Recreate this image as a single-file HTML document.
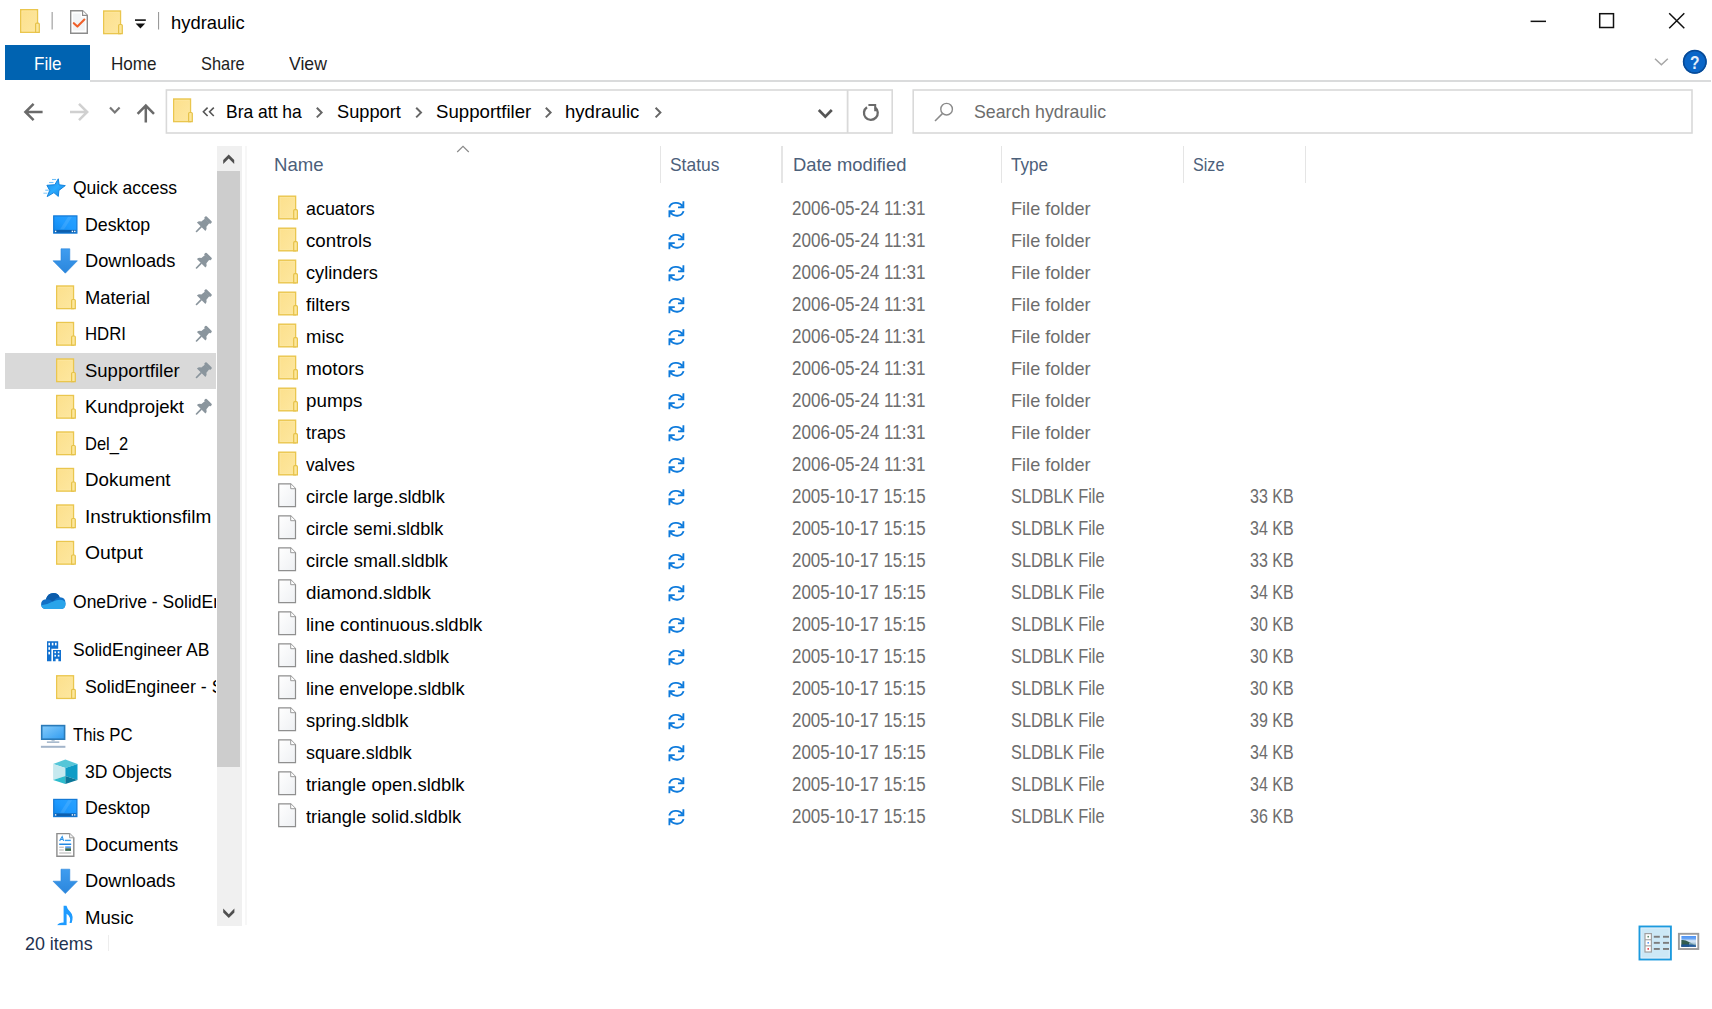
<!DOCTYPE html>
<html><head><meta charset="utf-8"><title>hydraulic</title>
<style>
html,body{margin:0;padding:0;background:#fff;}
body{width:1712px;height:1009px;position:relative;overflow:hidden;font-family:"Liberation Sans",sans-serif;}
.t{position:absolute;white-space:pre;font-family:"Liberation Sans",sans-serif;}
.t span{display:inline-block;transform-origin:0 50%;}
.b{position:absolute;}
#ico{position:absolute;left:0;top:0;}
</style></head><body>
<!-- boxes -->
<div class="b" style="left:5px;top:45px;width:85px;height:35px;background:#0063b1"></div>
<div class="b" style="left:90px;top:80px;width:1621px;height:2px;background:#dadbdc"></div>
<!-- sidebar selection + scrollbar -->
<div class="b" style="left:5px;top:352.5px;width:211px;height:36px;background:#d9d9d9"></div>
<div class="b" style="left:217px;top:145.5px;width:24.6px;height:780px;background:#f0f0f0"></div>
<div class="b" style="left:217px;top:171px;width:23px;height:596px;background:#cdcdcd"></div>
<div class="b" style="left:245px;top:146px;width:2px;height:779px;background:#f7f7f7"></div>
<!-- column separators -->
<div class="b" style="left:660px;top:146px;width:1.3px;height:37px;background:#e5e5e5"></div>
<div class="b" style="left:781.3px;top:146px;width:1.3px;height:37px;background:#e5e5e5"></div>
<div class="b" style="left:1000.5px;top:146px;width:1.3px;height:37px;background:#e5e5e5"></div>
<div class="b" style="left:1183px;top:146px;width:1.3px;height:37px;background:#e5e5e5"></div>
<div class="b" style="left:1304.7px;top:146px;width:1.3px;height:37px;background:#e5e5e5"></div>
<!-- status separators -->
<div class="b" style="left:108px;top:935px;width:1px;height:16px;background:#ededed"></div>
<svg id="ico" width="1712" height="1009" viewBox="0 0 1712 1009">
<defs>
<linearGradient id="fg" x1="0" y1="0" x2="1" y2="1"><stop offset="0" stop-color="#fce08c"/><stop offset="1" stop-color="#fde7a0"/></linearGradient>
<linearGradient id="pg" x1="0" y1="0" x2="1" y2="1"><stop offset="0" stop-color="#ffffff"/><stop offset="1" stop-color="#eef0f3"/></linearGradient>
<linearGradient id="dg" x1="0" y1="1" x2="1" y2="0"><stop offset="0" stop-color="#0f86ea"/><stop offset="0.5" stop-color="#1e9aff"/><stop offset="1" stop-color="#2aa2ff"/></linearGradient>
<linearGradient id="ag" x1="0" y1="0" x2="0" y2="1"><stop offset="0" stop-color="#3f9df0"/><stop offset="1" stop-color="#2b86dc"/></linearGradient>
<linearGradient id="mg" x1="0" y1="0" x2="1" y2="1"><stop offset="0" stop-color="#86ccfb"/><stop offset="1" stop-color="#2f9bf0"/></linearGradient>
<linearGradient id="sg" x1="0" y1="0" x2="1" y2="1"><stop offset="0" stop-color="#1c8de6"/><stop offset="0.5" stop-color="#2babff"/><stop offset="1" stop-color="#1281dc"/></linearGradient>

<g id="fold">
  <rect x="0.7" y="0.7" width="16.8" height="22.6" fill="url(#fg)" stroke="#eac64e" stroke-width="1.4"/>
  <rect x="2" y="2" width="14.2" height="20" fill="none" stroke="#fde9a4" stroke-width="0.8" opacity="0.8"/>
  <path d="M15.6 23.3 V15.2 Q15.6 14.2 16.6 14.2 H18.3 Q19.3 14.2 19.3 15.2 V23.3 Z" fill="#fde79c" stroke="#e6c24a" stroke-width="1.2"/>
</g>
<g id="file">
  <path d="M0.6 0.6 H12.6 L17.4 5.4 V23.4 H0.6 Z" fill="url(#pg)" stroke="#8f8f8f" stroke-width="1.2"/>
  <path d="M12.6 0.6 V5.4 H17.4" fill="#fff" stroke="#9a9a9a" stroke-width="1"/>
</g>
<g id="sync" fill="none" stroke="#0f7bdc" stroke-width="1.9">
  <path d="M0.9 6.2 C2.2 0.6 11 -0.2 14.2 5.2"/>
  <path d="M15.1 9.8 C13.8 15.4 5 16.2 1.8 10.8"/>
  <path d="M15 0 V6.1 H9.6" stroke-width="1.8" />
  <path d="M1 16 V9.9 H6.4" stroke-width="1.8"/>
  <path d="M15 1.5 V6.1 H10.6 Z M1 14.5 V9.9 H5.4 Z" fill="#0f7bdc" stroke="none" opacity="0.55"/>
</g>
<g id="pin" fill="#8a959d">
  <g transform="rotate(45)">
    <rect x="-4.4" y="0" width="8.8" height="3" rx="1"/>
    <path d="M-3.1 2.6 H3.1 L3.6 7.4 Q6 8.6 6 11.2 H-6 Q-6 8.6 -3.6 7.4 Z"/>
    <rect x="-0.85" y="10.6" width="1.7" height="8" rx="0.8"/>
  </g>
</g>
<g id="desk">
  <rect x="0.6" y="0.6" width="23.2" height="17.2" fill="url(#dg)" stroke="#1379d6" stroke-width="1.2"/>
  <rect x="1.2" y="14.6" width="22" height="2.8" fill="#0d5fae"/>
  <rect x="1.8" y="15.4" width="1.4" height="1.4" fill="#fff"/><rect x="18.6" y="15.4" width="1.4" height="1.4" fill="#fff"/><rect x="21" y="15.4" width="1.4" height="1.4" fill="#fff"/>
  <path d="M7 14 L15 1.4 H19 L11 14 Z" fill="#fff" opacity="0.10"/>
</g>
<g id="down">
  <path d="M8 0 H16.8 V12 H24.4 L12.3 24.4 L0 12 H8 Z" fill="url(#ag)" stroke="#2a84da" stroke-width="0.6"/>
</g>
<g id="star">
  <path d="M14.8 0 L15.6 6 L21.8 6.8 L15.4 11.6 L14.8 17.6 L10.4 13.8 L3.7 17.8 L6.2 11.6 L3.4 6.5 L11.3 5.9 Z" fill="url(#sg)" stroke="#1584de" stroke-width="1" stroke-linejoin="round"/>
  <path d="M8.5 0.7 H12.6" stroke="#6fc0f8" stroke-width="1.1" fill="none"/>
  <path d="M5.6 3.7 H10" stroke="#6fc0f8" stroke-width="1.1" fill="none"/>
  <path d="M1.8 11.4 H5.2" stroke="#6fc0f8" stroke-width="1.1" fill="none"/>
  <path d="M-0.1 14.4 H3.9" stroke="#8ccdf9" stroke-width="1.1" fill="none"/>
</g>
<g id="cloud">
  <path d="M5.2 16.2 Q0.2 16.2 0.2 11.4 Q0.2 7 5 6.4 Q7 0.2 12.6 0.2 Q17 0.2 18.8 4.4 Q24.6 4.2 24.6 10.6 Q24.6 16.2 19.6 16.2 Z" fill="#1170c6"/>
  <path d="M5.2 16.2 Q0.8 16.2 0.4 12.4 Q6 12 12 8.6 Q17 6.2 21.4 7 Q24.6 8 24.6 11 Q24.6 16.2 19.6 16.2 Z" fill="#29a4ea"/>
  <path d="M5 6.4 Q7 0.2 12.6 0.2 Q17 0.2 18.8 4.4 Q15 5 12 8.6 Q8 6 5 6.4 Z" fill="#0c5cab"/>
</g>
<g id="bldg" fill="#1170cf">
  <path d="M0 0 H11.2 V7.6 H4.4 V20 H0 Z"/>
  <path d="M6 8.8 H14 V20 H11.4 V17.6 H8.6 V20 H6 Z"/>
  <g fill="#fff">
   <rect x="1.4" y="1.6" width="1.6" height="2.6"/><rect x="4.8" y="1.6" width="1.6" height="2.6"/><rect x="8" y="1.6" width="1.6" height="2.6"/>
   <rect x="1.4" y="6" width="1.6" height="2.6"/><rect x="1.4" y="10.6" width="1.6" height="2.6"/>
   <rect x="7.4" y="10.2" width="1.6" height="1.8"/><rect x="10.8" y="10.2" width="1.6" height="1.8"/>
   <rect x="7.4" y="13.6" width="1.6" height="1.8"/><rect x="10.8" y="13.6" width="1.6" height="1.8"/>
  </g>
</g>
<g id="pc">
  <rect x="0.8" y="0.8" width="22.9" height="13.6" fill="url(#mg)" stroke="#2a7ab8" stroke-width="1.6"/>
  <rect x="6" y="16.6" width="12.4" height="1.5" fill="#9fb3c8"/>
  <rect x="10.6" y="15.2" width="3.2" height="1.6" fill="#b8c8d8"/>
  <rect x="0" y="21" width="24.5" height="2" fill="#a3b5ca"/>
</g>
<g id="cube">
  <path d="M12.3 0 L24.4 4.4 L12.3 8.6 L0 4.4 Z" fill="#55c6d8"/>
  <path d="M0 4.4 L12.3 8.6 V16.6 L0 20.4 Z" fill="#c6e9ef"/>
  <path d="M24.4 4.4 L12.3 8.6 V16.6 L24.4 20.4 Z" fill="#0e9cc6"/>
  <path d="M0 20.4 L12.3 16.6 V24.6 Z" fill="#2cbccd"/>
  <path d="M24.4 20.4 L12.3 16.6 V24.6 Z" fill="#0a7799"/>
</g>
<g id="docs">
  <path d="M0.7 0.7 H13.4 L17.6 4.9 V23.3 H0.7 Z" fill="#fff" stroke="#8c8c8c" stroke-width="1.4"/>
  <path d="M13.4 0.7 V4.9 H17.6" fill="#f0f0f0" stroke="#9a9a9a" stroke-width="1"/>
  <path d="M3.4 8 L6 3.6 L7.4 8 M4.4 6.6 H7" stroke="#2e94e8" stroke-width="1.1" fill="none"/>
  <rect x="8.6" y="6.8" width="6" height="1.4" fill="#3a9fee"/>
  <rect x="3" y="10.6" width="12" height="1.5" fill="#2288e2"/>
  <rect x="3" y="13.8" width="4.6" height="1" fill="#b0b0b0"/><rect x="3" y="16.6" width="4.6" height="1" fill="#b0b0b0"/>
  <rect x="9" y="13.4" width="5.8" height="2" fill="#5aa0ee"/><rect x="9" y="15.4" width="5.8" height="2.6" fill="#3c6a52"/>
  <rect x="3" y="19.6" width="12" height="1" fill="#b0b0b0"/>
</g>
<g id="music" fill="#1e9bff">
  <path d="M6.6 0 H9.4 Q10 3.4 13.4 6.4 Q17 10 14.6 17.6 L12.6 17.4 Q14.6 11.6 9.6 8.2 V20 H0 Q1.4 17.2 6.6 17 Z"/>
</g>
<g id="chk">
  <path d="M0.7 0.7 H12.6 L17.3 5.4 V23.3 H0.7 Z" fill="#fff" stroke="#8c8c8c" stroke-width="1.4"/>
  <path d="M3 3.6 H11 V7.4 H14.8 V20.6 H3 Z" fill="#f2f4f6"/>
  <path d="M12.6 0.7 V5.4 H17.3" fill="#fff" stroke="#8c8c8c" stroke-width="1.1"/>
  <path d="M3.8 13.2 L7.4 16.6 L14.4 9.6" fill="none" stroke="#f0602a" stroke-width="2.1" stroke-linecap="round" stroke-linejoin="round"/>
</g>
</defs>
<rect x="166.4" y="90" width="725.8" height="43" fill="none" stroke="#d9d9d9" stroke-width="1.6"/><rect x="846.7" y="90" width="1.8" height="43" fill="#d9d9d9"/><rect x="913.2" y="90" width="778.8" height="43" fill="none" stroke="#d9d9d9" stroke-width="1.6"/>
<use href="#fold" x="20.0" y="9.0"/>
<use href="#chk" x="70.0" y="10.0"/>
<use href="#fold" x="103.0" y="10.3"/>
<rect x="51.6" y="12" width="1.1" height="17.5" fill="#9a9a9a"/><rect x="158" y="12" width="1.1" height="17.5" fill="#9a9a9a"/>
<rect x="135" y="19.3" width="10.8" height="1.6" fill="#111"/><path d="M135.6 23.4 H145.2 L140.4 28.4 Z" fill="#111"/>
<rect x="1530.6" y="20.6" width="15.4" height="1.5" fill="#111"/>
<rect x="1599.7" y="13.7" width="13.8" height="13.8" fill="none" stroke="#111" stroke-width="1.5"/>
<path d="M1669.2 13.2 L1684.3 28.3 M1684.3 13.2 L1669.2 28.3" stroke="#111" stroke-width="1.5" fill="none"/>
<path d="M1655 58.8 L1661.4 64.8 L1667.8 58.8" stroke="#a6a6a6" stroke-width="1.5" fill="none"/>
<circle cx="1694.8" cy="61.8" r="11.9" fill="#0a66c8"/><circle cx="1694.8" cy="61.8" r="11.2" fill="none" stroke="#084a96" stroke-width="1.5"/>
<path d="M42.6 112 H26 M33.6 103.8 L25.4 112 L33.6 120.2" stroke="#6a6a6a" stroke-width="2.5" fill="none"/>
<path d="M70 112 H86.6 M79 103.8 L87.2 112 L79 120.2" stroke="#d0d0d0" stroke-width="2.5" fill="none"/>
<path d="M110 107.4 L114.8 112.4 L119.6 107.4" stroke="#777" stroke-width="2.2" fill="none"/>
<path d="M145.8 122.4 V105.8 M137.6 113.8 L145.8 105.6 L154 113.8" stroke="#6a6a6a" stroke-width="2.5" fill="none"/>
<use href="#fold" x="173.0" y="98.3"/>
<path d="M207.6 107.6 L203.4 111.8 L207.6 116 M213.8 107.6 L209.6 111.8 L213.8 116" stroke="#555" stroke-width="1.6" fill="none"/>
<path d="M316.8 107.8 L321.6 112.6 L316.8 117.4" stroke="#666" stroke-width="2" fill="none"/>
<path d="M416.2 107.8 L421.0 112.6 L416.2 117.4" stroke="#666" stroke-width="2" fill="none"/>
<path d="M545.8 107.8 L550.6 112.6 L545.8 117.4" stroke="#666" stroke-width="2" fill="none"/>
<path d="M655.6 107.8 L660.4 112.6 L655.6 117.4" stroke="#666" stroke-width="2" fill="none"/>
<path d="M818.8 110 L825.3 116.6 L831.8 110" stroke="#555" stroke-width="2.7" fill="none"/>
<path d="M867 107.2 A6.9 6.9 0 1 0 875 107.4" stroke="#6a6a6a" stroke-width="2.3" fill="none"/><path d="M868.4 105 H875.2 V111.2" stroke="#6a6a6a" stroke-width="2" fill="none"/>
<circle cx="946.6" cy="109.2" r="5.8" stroke="#8a8a8a" stroke-width="1.4" fill="none"/><path d="M942.4 113.6 L935 121" stroke="#8a8a8a" stroke-width="1.5" fill="none"/>
<path d="M457.2 152 L463 146.4 L468.8 152" stroke="#8a8a8a" stroke-width="1.2" fill="none"/>
<path d="M223.2 160 L228.7 154.4 L234.2 160 V163.9 L228.7 158.4 L223.2 163.9 Z" fill="#505050"/>
<path d="M223.2 908.6 L228.8 914.2 L234.4 908.6 V912.5 L228.8 918.1 L223.2 912.5 Z" fill="#505050"/>
<use href="#star" x="43.5" y="178.8"/>
<use href="#desk" x="53.1" y="215.3"/>
<g transform="translate(209.1,218.9)"><use href="#pin"/></g>
<use href="#down" x="53.0" y="248.8"/>
<g transform="translate(209.1,255.4)"><use href="#pin"/></g>
<use href="#fold" x="56.0" y="285.3"/>
<g transform="translate(209.1,291.9)"><use href="#pin"/></g>
<use href="#fold" x="56.0" y="321.8"/>
<g transform="translate(209.1,328.4)"><use href="#pin"/></g>
<use href="#fold" x="56.0" y="358.3"/>
<g transform="translate(209.1,364.9)"><use href="#pin"/></g>
<use href="#fold" x="56.0" y="394.8"/>
<g transform="translate(209.1,401.4)"><use href="#pin"/></g>
<use href="#fold" x="56.0" y="431.3"/>
<use href="#fold" x="56.0" y="467.8"/>
<use href="#fold" x="56.0" y="504.3"/>
<use href="#fold" x="56.0" y="540.8"/>
<use href="#cloud" x="40.9" y="592.9"/>
<use href="#bldg" x="47.0" y="641.2"/>
<use href="#fold" x="56.0" y="675.1"/>
<use href="#pc" x="40.9" y="724.8"/>
<use href="#cube" x="53.1" y="759.5"/>
<use href="#desk" x="53.1" y="798.8"/>
<use href="#docs" x="56.2" y="832.9"/>
<use href="#down" x="53.0" y="869.2"/>
<svg x="57" y="905.5" width="17" height="19.8" viewBox="0 0 17 19.8"><use href="#music"/></svg>
<use href="#fold" x="278.1" y="195.5"/>
<use href="#sync" x="668.4" y="201.3"/>
<use href="#fold" x="278.1" y="227.5"/>
<use href="#sync" x="668.4" y="233.3"/>
<use href="#fold" x="278.1" y="259.5"/>
<use href="#sync" x="668.4" y="265.3"/>
<use href="#fold" x="278.1" y="291.5"/>
<use href="#sync" x="668.4" y="297.3"/>
<use href="#fold" x="278.1" y="323.5"/>
<use href="#sync" x="668.4" y="329.3"/>
<use href="#fold" x="278.1" y="355.5"/>
<use href="#sync" x="668.4" y="361.3"/>
<use href="#fold" x="278.1" y="387.5"/>
<use href="#sync" x="668.4" y="393.3"/>
<use href="#fold" x="278.1" y="419.5"/>
<use href="#sync" x="668.4" y="425.3"/>
<use href="#fold" x="278.1" y="451.5"/>
<use href="#sync" x="668.4" y="457.3"/>
<use href="#file" x="278.1" y="483.3"/>
<use href="#sync" x="668.4" y="489.3"/>
<use href="#file" x="278.1" y="515.3"/>
<use href="#sync" x="668.4" y="521.3"/>
<use href="#file" x="278.1" y="547.3"/>
<use href="#sync" x="668.4" y="553.3"/>
<use href="#file" x="278.1" y="579.3"/>
<use href="#sync" x="668.4" y="585.3"/>
<use href="#file" x="278.1" y="611.3"/>
<use href="#sync" x="668.4" y="617.3"/>
<use href="#file" x="278.1" y="643.3"/>
<use href="#sync" x="668.4" y="649.3"/>
<use href="#file" x="278.1" y="675.3"/>
<use href="#sync" x="668.4" y="681.3"/>
<use href="#file" x="278.1" y="707.3"/>
<use href="#sync" x="668.4" y="713.3"/>
<use href="#file" x="278.1" y="739.3"/>
<use href="#sync" x="668.4" y="745.3"/>
<use href="#file" x="278.1" y="771.3"/>
<use href="#sync" x="668.4" y="777.3"/>
<use href="#file" x="278.1" y="803.3"/>
<use href="#sync" x="668.4" y="809.3"/>
<rect x="1639.5" y="926.5" width="31.4" height="33" fill="#cce8f6" stroke="#1c9ade" stroke-width="1.9"/><rect x="1641.2" y="928.2" width="28" height="29.6" fill="none" stroke="#dceffa" stroke-width="0.9"/>
<rect x="1644.4" y="933" width="7.6" height="19.6" fill="#a0a0a0"/>
<rect x="1645.6" y="934.2" width="5.2" height="5" fill="#fff"/><rect x="1647.5" y="935.9" width="1.4" height="1.6" fill="#4a7a5a"/>
<rect x="1653.8" y="935.8" width="6" height="1.9" fill="#7c7c7c"/><rect x="1663" y="935.8" width="6" height="1.9" fill="#7c7c7c"/>
<rect x="1645.6" y="940.3" width="5.2" height="5" fill="#fff"/><rect x="1647.5" y="942.0" width="1.4" height="1.6" fill="#4a8cf0"/>
<rect x="1653.8" y="941.9" width="6" height="1.9" fill="#7c7c7c"/><rect x="1663" y="941.9" width="6" height="1.9" fill="#7c7c7c"/>
<rect x="1645.6" y="946.4" width="5.2" height="5" fill="#fff"/><rect x="1647.5" y="948.1" width="1.4" height="1.6" fill="#e02030"/>
<rect x="1653.8" y="948.0" width="6" height="1.9" fill="#7c7c7c"/><rect x="1663" y="948.0" width="6" height="1.9" fill="#7c7c7c"/>
<linearGradient id="lg" x1="0" y1="0" x2="0" y2="1"><stop offset="0" stop-color="#4d92f4"/><stop offset="0.25" stop-color="#6aa6f4"/><stop offset="0.45" stop-color="#d8e8f6"/><stop offset="0.8" stop-color="#9fc0d8"/><stop offset="1" stop-color="#2f68aa"/></linearGradient>
<rect x="1678.9" y="933.8" width="19.4" height="15.2" fill="#fff" stroke="#9c9c9c" stroke-width="1.9"/><rect x="1681.4" y="936" width="14.6" height="10.8" fill="url(#lg)"/><path d="M1681.4 940 Q1685 939.4 1689 942 T1696 944.6 V946.8 H1681.4 Z" fill="#24503e" opacity="0.9"/><path d="M1689 942.6 Q1693 943.4 1696 944 V946.8 H1689 Z" fill="#9cc0d0" opacity="0.7"/><path d="M1681.4 944.6 H1692 L1696 945.6 V946.8 H1681.4 Z" fill="#1b55a0" opacity="0.9"/></svg>
<div class="t" style="left:170.8px;top:10.6px;font-size:19px;line-height:23px;color:#000;"><span style="transform:scaleX(0.9678)">hydraulic</span></div>
<div class="t" style="left:33.6px;top:51.5px;font-size:19px;line-height:23px;color:#fff;"><span style="transform:scaleX(0.8980)">File</span></div>
<div class="t" style="left:110.8px;top:51.5px;font-size:19px;line-height:23px;color:#1e1e1e;"><span style="transform:scaleX(0.8996)">Home</span></div>
<div class="t" style="left:200.9px;top:51.5px;font-size:19px;line-height:23px;color:#1e1e1e;"><span style="transform:scaleX(0.8619)">Share</span></div>
<div class="t" style="left:288.9px;top:51.5px;font-size:19px;line-height:23px;color:#1e1e1e;"><span style="transform:scaleX(0.9279)">View</span></div>
<div class="t" style="left:226.1px;top:99.9px;font-size:19px;line-height:23px;color:#000;"><span style="transform:scaleX(0.9200)">Bra att ha</span></div>
<div class="t" style="left:337.1px;top:99.9px;font-size:19px;line-height:23px;color:#000;"><span style="transform:scaleX(0.9587)">Support</span></div>
<div class="t" style="left:435.6px;top:99.9px;font-size:19px;line-height:23px;color:#000;"><span style="transform:scaleX(0.9807)">Supportfiler</span></div>
<div class="t" style="left:565.1px;top:99.9px;font-size:19px;line-height:23px;color:#000;"><span style="transform:scaleX(0.9770)">hydraulic</span></div>
<div class="t" style="left:974.3px;top:99.9px;font-size:19px;line-height:23px;color:#6d6d6d;"><span style="transform:scaleX(0.9334)">Search hydraulic</span></div>
<div class="t" style="left:273.6px;top:152.9px;font-size:19px;line-height:23px;color:#4c607a;"><span style="transform:scaleX(0.9785)">Name</span></div>
<div class="t" style="left:670.0px;top:152.9px;font-size:19px;line-height:23px;color:#4c607a;"><span style="transform:scaleX(0.9169)">Status</span></div>
<div class="t" style="left:792.5px;top:152.9px;font-size:19px;line-height:23px;color:#4c607a;"><span style="transform:scaleX(0.9673)">Date modified</span></div>
<div class="t" style="left:1010.8px;top:152.9px;font-size:19px;line-height:23px;color:#4c607a;"><span style="transform:scaleX(0.9004)">Type</span></div>
<div class="t" style="left:1192.9px;top:152.9px;font-size:19px;line-height:23px;color:#4c607a;"><span style="transform:scaleX(0.8494)">Size</span></div>
<div class="t" style="left:25.4px;top:932.1px;font-size:19px;line-height:23px;color:#1e3250;"><span style="transform:scaleX(0.9413)">20 items</span></div>
<div class="t" style="left:72.8px;top:176.1px;font-size:19px;line-height:23px;color:#000;"><span style="transform:scaleX(0.9205)">Quick access</span></div>
<div class="t" style="left:84.9px;top:212.6px;font-size:19px;line-height:23px;color:#000;"><span style="transform:scaleX(0.9354)">Desktop</span></div>
<div class="t" style="left:84.9px;top:249.1px;font-size:19px;line-height:23px;color:#000;"><span style="transform:scaleX(0.9617)">Downloads</span></div>
<div class="t" style="left:84.9px;top:285.6px;font-size:19px;line-height:23px;color:#000;"><span style="transform:scaleX(0.9648)">Material</span></div>
<div class="t" style="left:84.9px;top:322.1px;font-size:19px;line-height:23px;color:#000;"><span style="transform:scaleX(0.8826)">HDRI</span></div>
<div class="t" style="left:84.9px;top:358.6px;font-size:19px;line-height:23px;color:#000;"><span style="transform:scaleX(0.9735)">Supportfiler</span></div>
<div class="t" style="left:84.9px;top:395.1px;font-size:19px;line-height:23px;color:#000;"><span style="transform:scaleX(0.9763)">Kundprojekt</span></div>
<div class="t" style="left:85.0px;top:431.6px;font-size:19px;line-height:23px;color:#000;"><span style="transform:scaleX(0.8680)">Del_2</span></div>
<div class="t" style="left:84.9px;top:468.1px;font-size:19px;line-height:23px;color:#000;"><span style="transform:scaleX(0.9883)">Dokument</span></div>
<div class="t" style="left:84.9px;top:504.6px;font-size:19px;line-height:23px;color:#000;"><span style="transform:scaleX(0.9968)">Instruktionsfilm</span></div>
<div class="t" style="left:84.9px;top:541.1px;font-size:19px;line-height:23px;color:#000;"><span style="transform:scaleX(1.0167)">Output</span></div>
<div class="t" style="left:72.8px;top:589.6px;font-size:19px;line-height:23px;color:#000;width:143.2px;overflow:hidden;"><span style="transform:scaleX(0.9220)">OneDrive - SolidEngineer AB</span></div>
<div class="t" style="left:72.8px;top:638.1px;font-size:19px;line-height:23px;color:#000;"><span style="transform:scaleX(0.9223)">SolidEngineer AB</span></div>
<div class="t" style="left:84.9px;top:674.6px;font-size:19px;line-height:23px;color:#000;width:131.1px;overflow:hidden;"><span style="transform:scaleX(0.9367)">SolidEngineer - Support</span></div>
<div class="t" style="left:72.8px;top:723.1px;font-size:19px;line-height:23px;color:#000;"><span style="transform:scaleX(0.8819)">This PC</span></div>
<div class="t" style="left:84.9px;top:759.6px;font-size:19px;line-height:23px;color:#000;"><span style="transform:scaleX(0.9246)">3D Objects</span></div>
<div class="t" style="left:84.9px;top:796.1px;font-size:19px;line-height:23px;color:#000;"><span style="transform:scaleX(0.9354)">Desktop</span></div>
<div class="t" style="left:84.9px;top:832.6px;font-size:19px;line-height:23px;color:#000;"><span style="transform:scaleX(0.9708)">Documents</span></div>
<div class="t" style="left:84.9px;top:869.1px;font-size:19px;line-height:23px;color:#000;"><span style="transform:scaleX(0.9617)">Downloads</span></div>
<div class="t" style="left:85.4px;top:905.6px;font-size:19px;line-height:23px;color:#000;"><span style="transform:scaleX(0.9793)">Music</span></div>
<div class="t" style="left:305.6px;top:197.2px;font-size:19px;line-height:23px;color:#000;"><span style="transform:scaleX(0.9413)">acuators</span></div>
<div class="t" style="left:791.7px;top:196.4px;font-size:20px;line-height:24px;color:#6d6d6d;"><span style="transform:scaleX(0.8527)">2006-05-24 11:31</span></div>
<div class="t" style="left:1010.8px;top:197.2px;font-size:19px;line-height:23px;color:#6d6d6d;"><span style="transform:scaleX(0.9542)">File folder</span></div>
<div class="t" style="left:305.6px;top:229.2px;font-size:19px;line-height:23px;color:#000;"><span style="transform:scaleX(0.9845)">controls</span></div>
<div class="t" style="left:791.7px;top:228.4px;font-size:20px;line-height:24px;color:#6d6d6d;"><span style="transform:scaleX(0.8527)">2006-05-24 11:31</span></div>
<div class="t" style="left:1010.8px;top:229.2px;font-size:19px;line-height:23px;color:#6d6d6d;"><span style="transform:scaleX(0.9542)">File folder</span></div>
<div class="t" style="left:305.6px;top:261.2px;font-size:19px;line-height:23px;color:#000;"><span style="transform:scaleX(0.9575)">cylinders</span></div>
<div class="t" style="left:791.7px;top:260.4px;font-size:20px;line-height:24px;color:#6d6d6d;"><span style="transform:scaleX(0.8527)">2006-05-24 11:31</span></div>
<div class="t" style="left:1010.8px;top:261.2px;font-size:19px;line-height:23px;color:#6d6d6d;"><span style="transform:scaleX(0.9542)">File folder</span></div>
<div class="t" style="left:305.6px;top:293.2px;font-size:19px;line-height:23px;color:#000;"><span style="transform:scaleX(0.9712)">filters</span></div>
<div class="t" style="left:791.7px;top:292.4px;font-size:20px;line-height:24px;color:#6d6d6d;"><span style="transform:scaleX(0.8527)">2006-05-24 11:31</span></div>
<div class="t" style="left:1010.8px;top:293.2px;font-size:19px;line-height:23px;color:#6d6d6d;"><span style="transform:scaleX(0.9542)">File folder</span></div>
<div class="t" style="left:305.6px;top:325.2px;font-size:19px;line-height:23px;color:#000;"><span style="transform:scaleX(0.9728)">misc</span></div>
<div class="t" style="left:791.7px;top:324.4px;font-size:20px;line-height:24px;color:#6d6d6d;"><span style="transform:scaleX(0.8527)">2006-05-24 11:31</span></div>
<div class="t" style="left:1010.8px;top:325.2px;font-size:19px;line-height:23px;color:#6d6d6d;"><span style="transform:scaleX(0.9542)">File folder</span></div>
<div class="t" style="left:305.6px;top:357.2px;font-size:19px;line-height:23px;color:#000;"><span style="transform:scaleX(0.9987)">motors</span></div>
<div class="t" style="left:791.7px;top:356.4px;font-size:20px;line-height:24px;color:#6d6d6d;"><span style="transform:scaleX(0.8527)">2006-05-24 11:31</span></div>
<div class="t" style="left:1010.8px;top:357.2px;font-size:19px;line-height:23px;color:#6d6d6d;"><span style="transform:scaleX(0.9542)">File folder</span></div>
<div class="t" style="left:305.6px;top:389.2px;font-size:19px;line-height:23px;color:#000;"><span style="transform:scaleX(0.9889)">pumps</span></div>
<div class="t" style="left:791.7px;top:388.4px;font-size:20px;line-height:24px;color:#6d6d6d;"><span style="transform:scaleX(0.8527)">2006-05-24 11:31</span></div>
<div class="t" style="left:1010.8px;top:389.2px;font-size:19px;line-height:23px;color:#6d6d6d;"><span style="transform:scaleX(0.9542)">File folder</span></div>
<div class="t" style="left:305.6px;top:421.2px;font-size:19px;line-height:23px;color:#000;"><span style="transform:scaleX(0.9373)">traps</span></div>
<div class="t" style="left:791.7px;top:420.4px;font-size:20px;line-height:24px;color:#6d6d6d;"><span style="transform:scaleX(0.8527)">2006-05-24 11:31</span></div>
<div class="t" style="left:1010.8px;top:421.2px;font-size:19px;line-height:23px;color:#6d6d6d;"><span style="transform:scaleX(0.9542)">File folder</span></div>
<div class="t" style="left:305.6px;top:453.2px;font-size:19px;line-height:23px;color:#000;"><span style="transform:scaleX(0.9061)">valves</span></div>
<div class="t" style="left:791.7px;top:452.4px;font-size:20px;line-height:24px;color:#6d6d6d;"><span style="transform:scaleX(0.8527)">2006-05-24 11:31</span></div>
<div class="t" style="left:1010.8px;top:453.2px;font-size:19px;line-height:23px;color:#6d6d6d;"><span style="transform:scaleX(0.9542)">File folder</span></div>
<div class="t" style="left:305.6px;top:485.2px;font-size:19px;line-height:23px;color:#000;"><span style="transform:scaleX(0.9517)">circle large.sldblk</span></div>
<div class="t" style="left:791.7px;top:484.4px;font-size:20px;line-height:24px;color:#6d6d6d;"><span style="transform:scaleX(0.8473)">2005-10-17 15:15</span></div>
<div class="t" style="left:1010.9px;top:484.4px;font-size:20px;line-height:24px;color:#6d6d6d;"><span style="transform:scaleX(0.8175)">SLDBLK File</span></div>
<div class="t" style="left:1249.7px;top:484.4px;font-size:20px;line-height:24px;color:#6d6d6d;"><span style="transform:scaleX(0.8002)">33 KB</span></div>
<div class="t" style="left:305.6px;top:517.2px;font-size:19px;line-height:23px;color:#000;"><span style="transform:scaleX(0.9569)">circle semi.sldblk</span></div>
<div class="t" style="left:791.7px;top:516.4px;font-size:20px;line-height:24px;color:#6d6d6d;"><span style="transform:scaleX(0.8473)">2005-10-17 15:15</span></div>
<div class="t" style="left:1010.9px;top:516.4px;font-size:20px;line-height:24px;color:#6d6d6d;"><span style="transform:scaleX(0.8175)">SLDBLK File</span></div>
<div class="t" style="left:1249.7px;top:516.4px;font-size:20px;line-height:24px;color:#6d6d6d;"><span style="transform:scaleX(0.8002)">34 KB</span></div>
<div class="t" style="left:305.6px;top:549.2px;font-size:19px;line-height:23px;color:#000;"><span style="transform:scaleX(0.9607)">circle small.sldblk</span></div>
<div class="t" style="left:791.7px;top:548.4px;font-size:20px;line-height:24px;color:#6d6d6d;"><span style="transform:scaleX(0.8473)">2005-10-17 15:15</span></div>
<div class="t" style="left:1010.9px;top:548.4px;font-size:20px;line-height:24px;color:#6d6d6d;"><span style="transform:scaleX(0.8175)">SLDBLK File</span></div>
<div class="t" style="left:1249.7px;top:548.4px;font-size:20px;line-height:24px;color:#6d6d6d;"><span style="transform:scaleX(0.8002)">33 KB</span></div>
<div class="t" style="left:305.6px;top:581.2px;font-size:19px;line-height:23px;color:#000;"><span style="transform:scaleX(0.9862)">diamond.sldblk</span></div>
<div class="t" style="left:791.7px;top:580.4px;font-size:20px;line-height:24px;color:#6d6d6d;"><span style="transform:scaleX(0.8473)">2005-10-17 15:15</span></div>
<div class="t" style="left:1010.9px;top:580.4px;font-size:20px;line-height:24px;color:#6d6d6d;"><span style="transform:scaleX(0.8175)">SLDBLK File</span></div>
<div class="t" style="left:1249.7px;top:580.4px;font-size:20px;line-height:24px;color:#6d6d6d;"><span style="transform:scaleX(0.8002)">34 KB</span></div>
<div class="t" style="left:305.6px;top:613.2px;font-size:19px;line-height:23px;color:#000;"><span style="transform:scaleX(0.9766)">line continuous.sldblk</span></div>
<div class="t" style="left:791.7px;top:612.4px;font-size:20px;line-height:24px;color:#6d6d6d;"><span style="transform:scaleX(0.8473)">2005-10-17 15:15</span></div>
<div class="t" style="left:1010.9px;top:612.4px;font-size:20px;line-height:24px;color:#6d6d6d;"><span style="transform:scaleX(0.8175)">SLDBLK File</span></div>
<div class="t" style="left:1249.7px;top:612.4px;font-size:20px;line-height:24px;color:#6d6d6d;"><span style="transform:scaleX(0.8002)">30 KB</span></div>
<div class="t" style="left:305.6px;top:645.2px;font-size:19px;line-height:23px;color:#000;"><span style="transform:scaleX(0.9461)">line dashed.sldblk</span></div>
<div class="t" style="left:791.7px;top:644.4px;font-size:20px;line-height:24px;color:#6d6d6d;"><span style="transform:scaleX(0.8473)">2005-10-17 15:15</span></div>
<div class="t" style="left:1010.9px;top:644.4px;font-size:20px;line-height:24px;color:#6d6d6d;"><span style="transform:scaleX(0.8175)">SLDBLK File</span></div>
<div class="t" style="left:1249.7px;top:644.4px;font-size:20px;line-height:24px;color:#6d6d6d;"><span style="transform:scaleX(0.8002)">30 KB</span></div>
<div class="t" style="left:305.6px;top:677.2px;font-size:19px;line-height:23px;color:#000;"><span style="transform:scaleX(0.9557)">line envelope.sldblk</span></div>
<div class="t" style="left:791.7px;top:676.4px;font-size:20px;line-height:24px;color:#6d6d6d;"><span style="transform:scaleX(0.8473)">2005-10-17 15:15</span></div>
<div class="t" style="left:1010.9px;top:676.4px;font-size:20px;line-height:24px;color:#6d6d6d;"><span style="transform:scaleX(0.8175)">SLDBLK File</span></div>
<div class="t" style="left:1249.7px;top:676.4px;font-size:20px;line-height:24px;color:#6d6d6d;"><span style="transform:scaleX(0.8002)">30 KB</span></div>
<div class="t" style="left:305.6px;top:709.2px;font-size:19px;line-height:23px;color:#000;"><span style="transform:scaleX(0.9696)">spring.sldblk</span></div>
<div class="t" style="left:791.7px;top:708.4px;font-size:20px;line-height:24px;color:#6d6d6d;"><span style="transform:scaleX(0.8473)">2005-10-17 15:15</span></div>
<div class="t" style="left:1010.9px;top:708.4px;font-size:20px;line-height:24px;color:#6d6d6d;"><span style="transform:scaleX(0.8175)">SLDBLK File</span></div>
<div class="t" style="left:1249.7px;top:708.4px;font-size:20px;line-height:24px;color:#6d6d6d;"><span style="transform:scaleX(0.8002)">39 KB</span></div>
<div class="t" style="left:305.6px;top:741.2px;font-size:19px;line-height:23px;color:#000;"><span style="transform:scaleX(0.9433)">square.sldblk</span></div>
<div class="t" style="left:791.7px;top:740.4px;font-size:20px;line-height:24px;color:#6d6d6d;"><span style="transform:scaleX(0.8473)">2005-10-17 15:15</span></div>
<div class="t" style="left:1010.9px;top:740.4px;font-size:20px;line-height:24px;color:#6d6d6d;"><span style="transform:scaleX(0.8175)">SLDBLK File</span></div>
<div class="t" style="left:1249.7px;top:740.4px;font-size:20px;line-height:24px;color:#6d6d6d;"><span style="transform:scaleX(0.8002)">34 KB</span></div>
<div class="t" style="left:305.6px;top:773.2px;font-size:19px;line-height:23px;color:#000;"><span style="transform:scaleX(0.9681)">triangle open.sldblk</span></div>
<div class="t" style="left:791.7px;top:772.4px;font-size:20px;line-height:24px;color:#6d6d6d;"><span style="transform:scaleX(0.8473)">2005-10-17 15:15</span></div>
<div class="t" style="left:1010.9px;top:772.4px;font-size:20px;line-height:24px;color:#6d6d6d;"><span style="transform:scaleX(0.8175)">SLDBLK File</span></div>
<div class="t" style="left:1249.7px;top:772.4px;font-size:20px;line-height:24px;color:#6d6d6d;"><span style="transform:scaleX(0.8002)">34 KB</span></div>
<div class="t" style="left:305.6px;top:805.2px;font-size:19px;line-height:23px;color:#000;"><span style="transform:scaleX(0.9674)">triangle solid.sldblk</span></div>
<div class="t" style="left:791.7px;top:804.4px;font-size:20px;line-height:24px;color:#6d6d6d;"><span style="transform:scaleX(0.8473)">2005-10-17 15:15</span></div>
<div class="t" style="left:1010.9px;top:804.4px;font-size:20px;line-height:24px;color:#6d6d6d;"><span style="transform:scaleX(0.8175)">SLDBLK File</span></div>
<div class="t" style="left:1249.7px;top:804.4px;font-size:20px;line-height:24px;color:#6d6d6d;"><span style="transform:scaleX(0.8002)">36 KB</span></div><div class="t" style="left:1690px;top:52px;font-size:19px;line-height:22px;font-weight:700;color:#e4effb"><span style="transform:scaleX(0.82)">?</span></div>
</body></html>
